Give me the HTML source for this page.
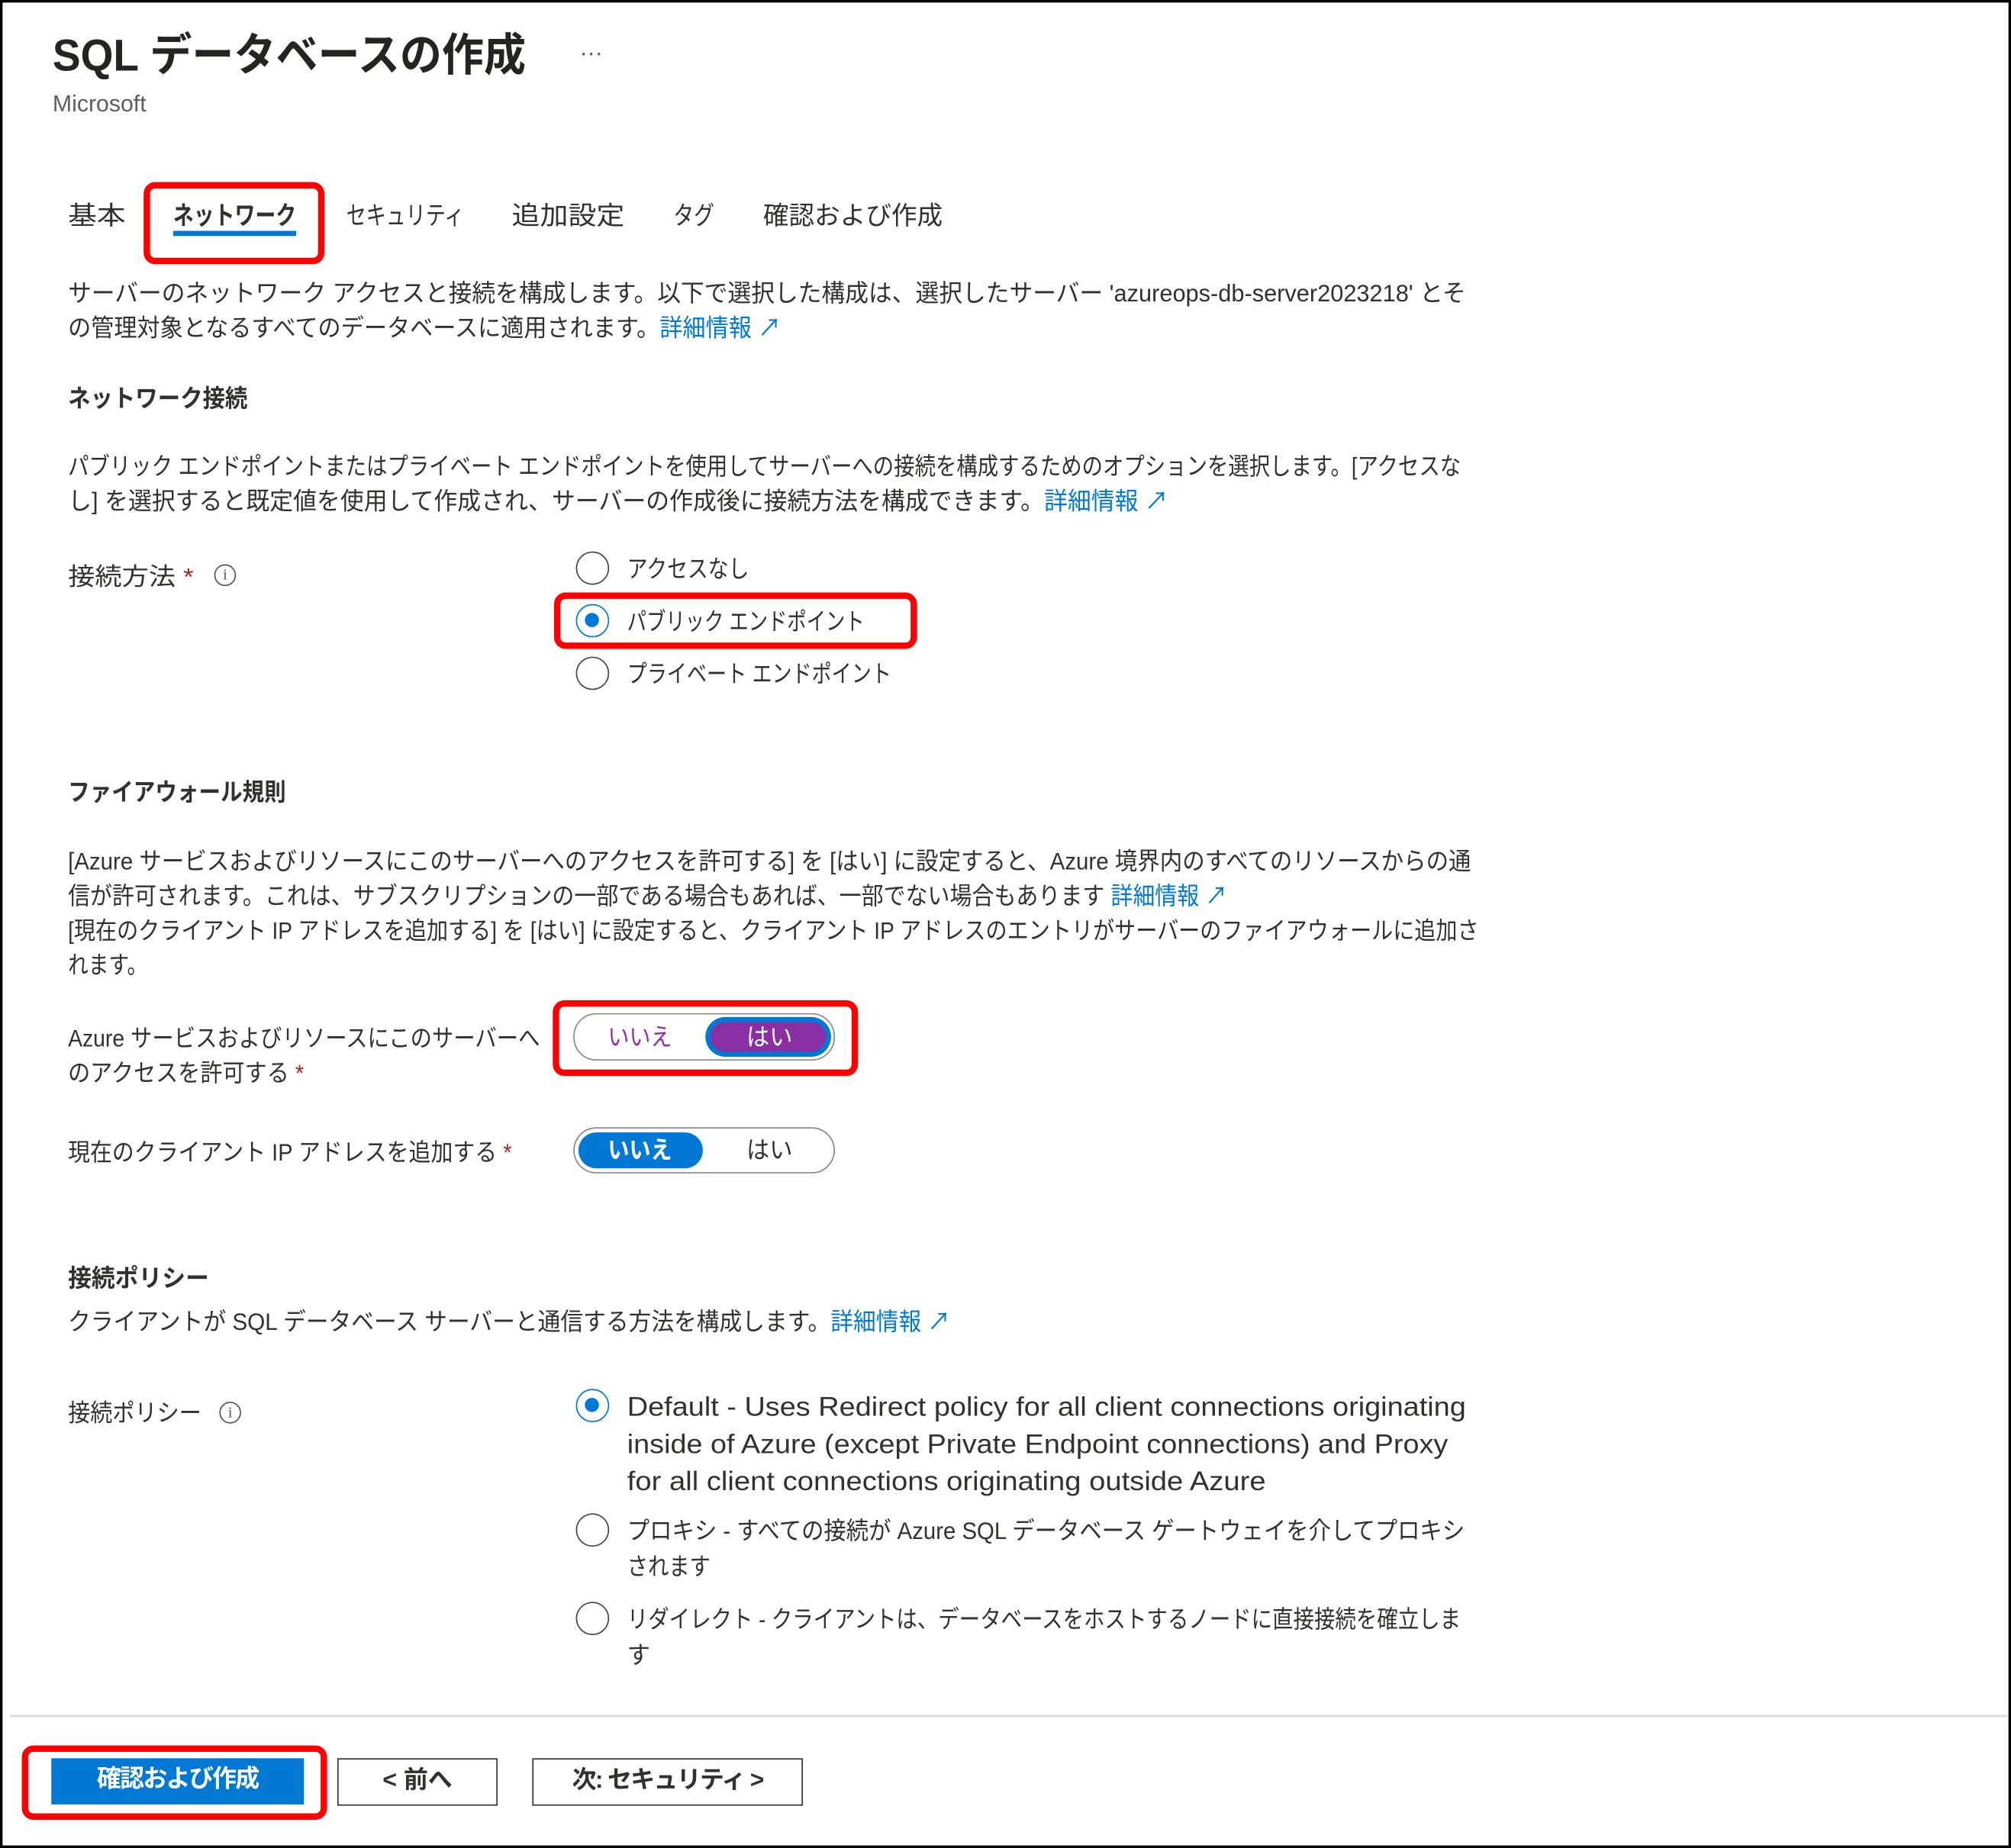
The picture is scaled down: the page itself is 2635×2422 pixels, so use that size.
<!DOCTYPE html>
<html><head><meta charset="utf-8">
<style>
html,body{margin:0;padding:0;background:#fff;}
body{width:2635px;height:2422px;overflow:hidden;position:relative;}
#w{position:absolute;left:0;top:0;width:1568px;height:1441px;transform:scale(1.6805,1.6808);transform-origin:0 0;font-family:"Liberation Sans","Noto Sans CJK JP",sans-serif;color:#323130;}
.a{position:absolute;white-space:nowrap;}
.ln{position:absolute;white-space:nowrap;font-size:19px;line-height:27px;}
.ln>span{display:inline-block;transform-origin:0 50%;}
.tab{font-size:20px;line-height:28px;}
.lk{color:#0078d4;}
.b{font-weight:bold;}
.red{position:absolute;border:5px solid #f00;border-radius:9px;box-sizing:border-box;}
.rad{position:absolute;width:26px;height:26px;border:1.5px solid #444;border-radius:50%;box-sizing:border-box;background:#fff;}
.rad.on{border-color:#0078d4;}
.rad.on::after{content:"";position:absolute;left:6px;top:6px;width:11px;height:11px;border-radius:50%;background:#0078d4;}
.info{position:absolute;width:17px;height:17px;border:1.3px solid #555;border-radius:50%;box-sizing:border-box;font-size:12px;line-height:15px;text-align:center;color:#555;font-family:"Liberation Serif",serif;}
.star{color:#a4262c;}
.tg{position:absolute;border:1.5px solid #8a8886;border-radius:18px;box-sizing:border-box;background:#fff;}
.btn{position:absolute;box-sizing:border-box;border:1.5px solid #333;font-size:19px;font-weight:bold;text-align:center;}
</style></head><body>
<div id="w">
<div style="position:absolute;left:0;top:0;width:1568px;height:1441px;border:2px solid #000;box-sizing:border-box;"></div>
<div class="ln" style="left:41px;top:22px;width:369px;font-size:35px;line-height:44px;font-weight:600;color:#252423;"><span>SQL データベースの作成</span></div>
<div class="a" style="left:452px;top:31px;font-size:18px;color:#555;">···</div>
<div class="a" style="left:41px;top:71px;font-size:18px;color:#605e5c;">Microsoft</div>

<div class="ln tab" style="left:53px;top:155px;width:45px;"><span>基本</span></div>
<div class="ln tab b" style="left:135px;top:155px;width:96px;"><span>ネットワーク</span></div>
<div style="position:absolute;left:135px;top:180px;width:96px;height:4px;background:#0078d4;"></div>
<div class="red" style="left:112px;top:142px;width:141px;height:64px;"></div>
<div class="ln tab" style="left:270px;top:155px;width:92px;"><span>セキュリティ</span></div>
<div class="ln tab" style="left:399px;top:155px;width:88px;"><span>追加設定</span></div>
<div class="ln tab" style="left:525px;top:155px;width:32px;"><span>タグ</span></div>
<div class="ln tab" style="left:595px;top:155px;width:140px;"><span>確認および作成</span></div>

<div class="ln" style="left:53px;top:216px;width:1090px;"><span>サーバーのネットワーク アクセスと接続を構成します。以下で選択した構成は、選択したサーバー 'azureops-db-server2023218' とそ</span></div>
<div class="ln" style="left:53px;top:243px;width:556px;"><span>の管理対象となるすべてのデータベースに適用されます。<span class="lk">詳細情報 ↗</span></span></div>

<div class="ln b" style="left:53px;top:298px;width:140px;"><span>ネットワーク接続</span></div>
<div class="ln" style="left:53px;top:351px;width:1086px;"><span>パブリック エンドポイントまたはプライベート エンドポイントを使用してサーバーへの接続を構成するためのオプションを選択します。[アクセスな</span></div>
<div class="ln" style="left:53px;top:378px;width:858px;"><span>し] を選択すると既定値を使用して作成され、サーバーの作成後に接続方法を構成できます。<span class="lk">詳細情報 ↗</span></span></div>

<div class="ln" style="left:53px;top:437px;width:98px;"><span>接続方法 <span class="star">*</span></span></div>
<div class="info" style="left:167px;top:440px;">i</div>
<div class="rad" style="left:449px;top:430px;"></div>
<div class="ln" style="left:489px;top:431px;width:95px;"><span>アクセスなし</span></div>
<div class="rad on" style="left:449px;top:471px;"></div>
<div class="ln" style="left:489px;top:472px;width:185px;"><span>パブリック エンドポイント</span></div>
<div class="rad" style="left:449px;top:512px;"></div>
<div class="ln" style="left:489px;top:513px;width:206px;"><span>プライベート エンドポイント</span></div>
<div class="red" style="left:432px;top:462px;width:283px;height:44px;"></div>

<div class="ln b" style="left:53px;top:605px;width:170px;"><span>ファイアウォール規則</span></div>
<div class="ln" style="left:53px;top:659px;width:1094px;"><span>[Azure サービスおよびリソースにこのサーバーへのアクセスを許可する] を [はい] に設定すると、Azure 境界内のすべてのリソースからの通</span></div>
<div class="ln" style="left:53px;top:686px;width:904px;"><span>信が許可されます。これは、サブスクリプションの一部である場合もあれば、一部でない場合もあります <span class="lk">詳細情報 ↗</span></span></div>
<div class="ln" style="left:53px;top:713px;width:1100px;"><span>[現在のクライアント IP アドレスを追加する] を [はい] に設定すると、クライアント IP アドレスのエントリがサーバーのファイアウォールに追加さ</span></div>
<div class="ln" style="left:53px;top:740px;width:62px;"><span>れます。</span></div>

<div class="ln" style="left:53px;top:797px;width:368px;"><span>Azure サービスおよびリソースにこのサーバーへ</span></div>
<div class="ln" style="left:53px;top:824px;width:184px;"><span>のアクセスを許可する <span class="star">*</span></span></div>
<div class="tg" style="left:447px;top:790px;width:204px;height:37px;"></div>
<div class="ln" style="left:474px;top:796px;width:50px;color:#8f2fa8;"><span>いいえ</span></div>
<div style="position:absolute;left:550px;top:793px;width:98px;height:31px;border-radius:16px;background:#0078d4;"></div>
<div style="position:absolute;left:554px;top:797px;width:90px;height:23px;border-radius:12px;background:#8a2ea3;"></div>
<div class="ln" style="left:582px;top:796px;width:36px;color:#fff;"><span>はい</span></div>
<div class="red" style="left:431px;top:780px;width:238px;height:59px;"></div>

<div class="ln" style="left:53px;top:886px;width:346px;"><span>現在のクライアント IP アドレスを追加する <span class="star">*</span></span></div>
<div class="tg" style="left:447px;top:879px;width:204px;height:36px;"></div>
<div style="position:absolute;left:451px;top:883px;width:97px;height:28px;border-radius:14px;background:#0078d4;"></div>
<div class="ln b" style="left:474px;top:884px;width:50px;color:#fff;"><span>いいえ</span></div>
<div class="ln" style="left:582px;top:884px;width:36px;"><span>はい</span></div>

<div class="ln b" style="left:53px;top:984px;width:110px;"><span>接続ポリシー</span></div>
<div class="ln" style="left:53px;top:1018px;width:688px;"><span>クライアントが SQL データベース サーバーと通信する方法を構成します。<span class="lk">詳細情報 ↗</span></span></div>

<div class="ln" style="left:53px;top:1089px;width:104px;"><span>接続ポリシー</span></div>
<div class="info" style="left:171px;top:1093px;">i</div>
<div class="rad on" style="left:449px;top:1083px;"></div>
<div class="ln" style="left:489px;top:1083px;width:654px;font-size:21px;line-height:29px;"><span>Default - Uses Redirect policy for all client connections originating</span></div>
<div class="ln" style="left:489px;top:1112px;width:640px;font-size:21px;line-height:29px;"><span>inside of Azure (except Private Endpoint connections) and Proxy</span></div>
<div class="ln" style="left:489px;top:1141px;width:498px;font-size:21px;line-height:29px;"><span>for all client connections originating outside Azure</span></div>
<div class="rad" style="left:449px;top:1180px;"></div>
<div class="ln" style="left:489px;top:1181px;width:653px;"><span>プロキシ - すべての接続が Azure SQL データベース ゲートウェイを介してプロキシ</span></div>
<div class="ln" style="left:489px;top:1209px;width:65px;"><span>されます</span></div>
<div class="rad" style="left:449px;top:1249px;"></div>
<div class="ln" style="left:489px;top:1250px;width:650px;"><span>リダイレクト - クライアントは、データベースをホストするノードに直接接続を確立しま</span></div>
<div class="ln" style="left:489px;top:1278px;width:18px;"><span>す</span></div>

<div style="position:absolute;left:8px;top:1337px;width:1558px;height:2px;background:#e1dfdd;"></div>
<div style="position:absolute;left:40px;top:1371px;width:197px;height:36px;background:#0078d4;"></div>
<div class="a b" style="left:40px;top:1375px;width:197px;text-align:center;font-size:19px;line-height:26px;color:#fff;letter-spacing:-1px;">確認および作成</div>
<div class="red" style="left:17px;top:1361px;width:238px;height:58px;"></div>
<div class="btn" style="left:263px;top:1371px;width:125px;height:37px;line-height:33px;">&lt; 前へ</div>
<div class="btn" style="left:415px;top:1371px;width:211px;height:37px;line-height:33px;letter-spacing:-1px;">次: セキュリティ &gt;</div>
</div>
<script>
document.querySelectorAll('.ln').forEach(function(d){
  var s=d.firstElementChild;var tw=parseFloat(d.style.width);var w=s.getBoundingClientRect().width/1.6805;
  if(w>0&&tw){s.style.transform='scaleX('+(tw/w)+')';}
});
</script>
</body></html>
